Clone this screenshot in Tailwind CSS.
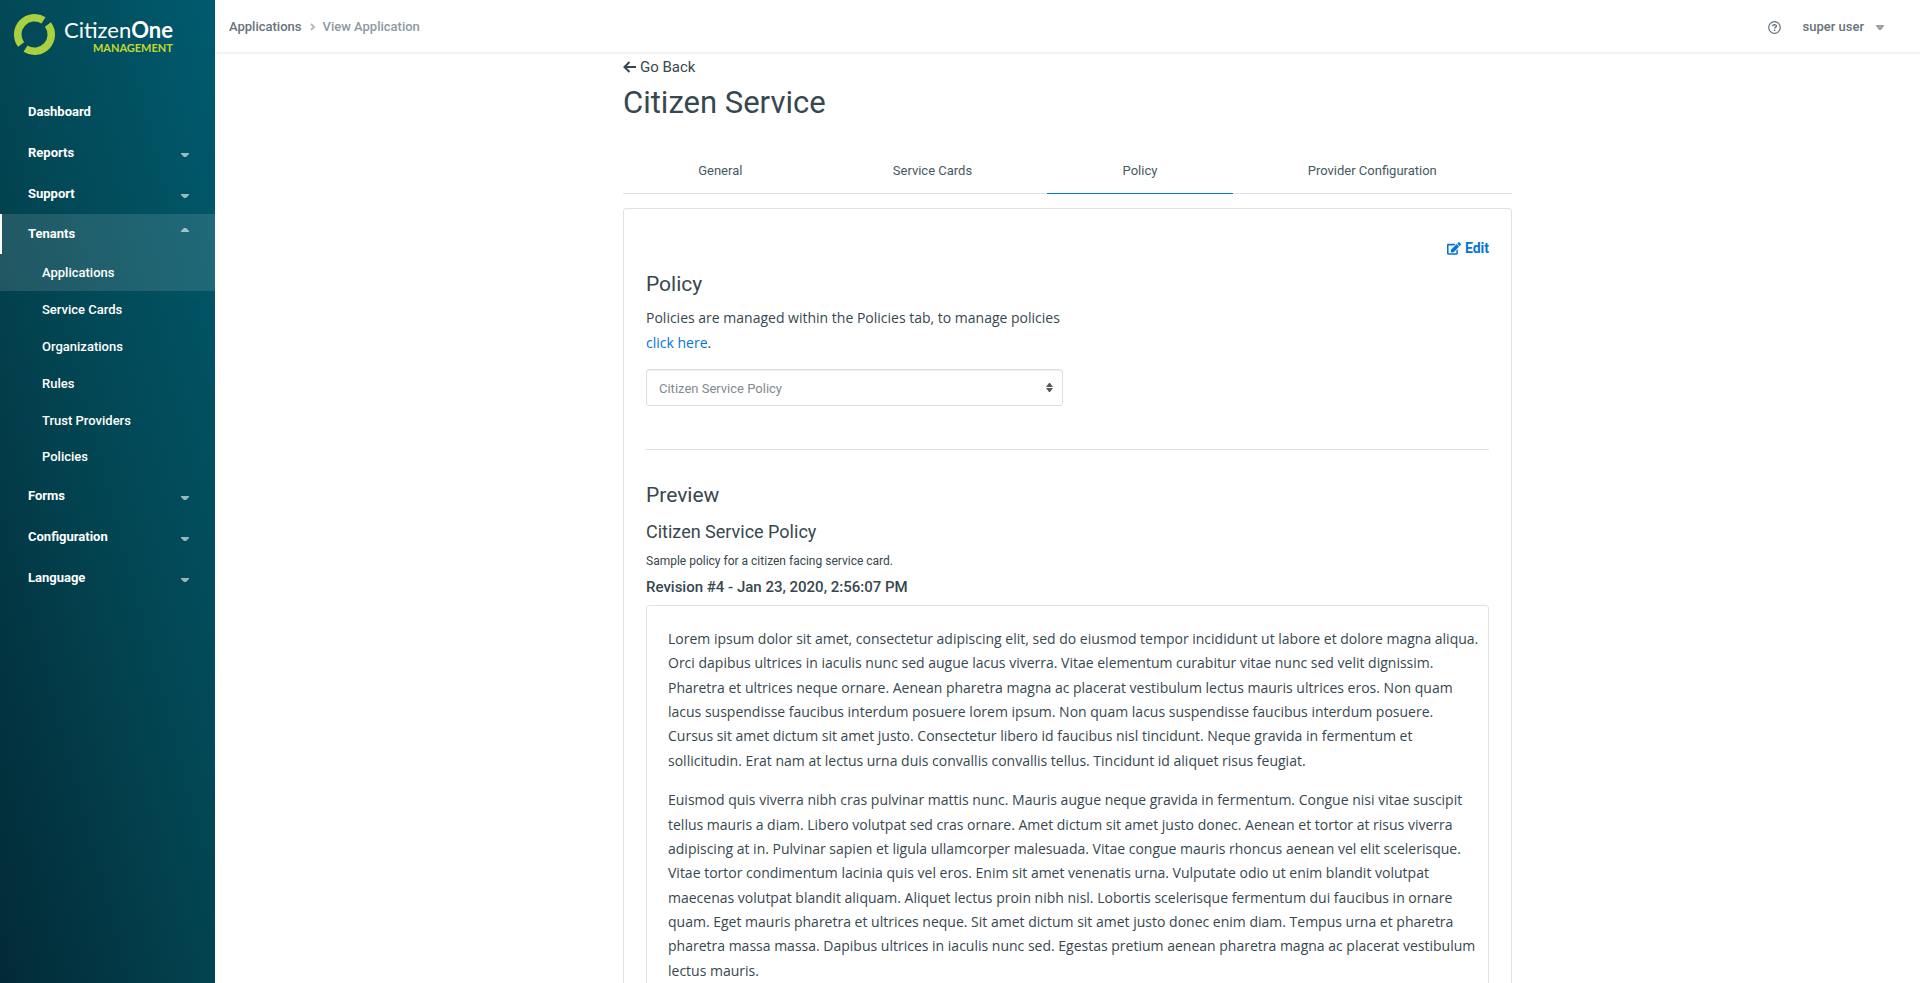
<!DOCTYPE html>
<html lang="en">
<head>
<meta charset="utf-8">
<meta name="viewport" content="width=device-width, initial-scale=1">
<title>CitizenOne Management</title>
<script src="https://cdn.jsdelivr.net/npm/@tailwindcss/browser@4"></script>
</head>
<body class="h-screen overflow-hidden bg-white font-['Roboto','Liberation_Sans',sans-serif] text-[15px] text-[#37474f]">
<div class="flex h-full">

  <aside class="flex w-[215px] shrink-0 flex-col bg-[linear-gradient(75deg,#022a36_0%,#034350_45%,#005b6e_100%)] text-[13px] text-white">
    <a href="#" aria-label="CitizenOne Management" class="flex h-[91px] items-start gap-2 pt-[13px] pl-[13px]">
      <svg class="size-[43px] shrink-0" viewBox="0 0 43 43" fill="none" stroke="#a9d03f" stroke-width="7.5" aria-hidden="true">
        <path d="M30.5 7.4A16.75 16.75 0 0 0 8.1 31.600"/>
        <path d="M34.900 11.4A16.75 16.75 0 0 1 12.5 35.600"/>
      </svg>
      <span class="flex flex-col items-end pt-[5px] font-['Lato',sans-serif]">
        <span class="text-[22px] leading-6">Citizen<b class="font-bold">One</b></span>
        <span class="text-[11px] leading-3 font-bold text-[#c4d92e]">MANAGEMENT</span>
      </span>
    </a>
    <nav class="font-bold">
      <a href="#" class="flex h-[41px] items-center pl-7">Dashboard</a>
      <button type="button" class="flex h-[41px] w-full items-center justify-between pr-[26px] pl-7">Reports
        <svg class="mt-1 h-1 w-2 fill-white/60" viewBox="0 0 8 4"><path d="M0 0h8v1L5 4H3L0 1z"/></svg></button>
      <button type="button" class="flex h-[41px] w-full items-center justify-between pr-[26px] pl-7">Support
        <svg class="mt-1 h-1 w-2 fill-white/60" viewBox="0 0 8 4"><path d="M0 0h8v1L5 4H3L0 1z"/></svg></button>
      <button type="button" class="flex h-10 w-full items-center justify-between border-l-2 border-white bg-white/12 pr-[26px] pl-[26px]">Tenants
        <svg class="mb-2 h-1 w-2 fill-white/60" viewBox="0 0 8 4"><path d="M0 4h8V3L5 0H3L0 3z"/></svg></button>
      <div class="font-medium">
        <a href="#" class="flex h-[37px] items-center bg-white/12 pl-[42px]">Applications</a>
        <a href="#" class="flex h-[37px] items-center pl-[42px]">Service Cards</a>
        <a href="#" class="flex h-[37px] items-center pl-[42px]">Organizations</a>
        <a href="#" class="flex h-[37px] items-center pl-[42px]">Rules</a>
        <a href="#" class="flex h-[37px] items-center pl-[42px]">Trust Providers</a>
        <a href="#" class="flex h-9 items-center pl-[42px]">Policies</a>
      </div>
      <button type="button" class="flex h-[41px] w-full items-center justify-between pr-[26px] pl-7">Forms
        <svg class="mt-1 h-1 w-2 fill-white/60" viewBox="0 0 8 4"><path d="M0 0h8v1L5 4H3L0 1z"/></svg></button>
      <button type="button" class="flex h-[41px] w-full items-center justify-between pr-[26px] pl-7">Configuration
        <svg class="mt-1 h-1 w-2 fill-white/60" viewBox="0 0 8 4"><path d="M0 0h8v1L5 4H3L0 1z"/></svg></button>
      <button type="button" class="flex h-[41px] w-full items-center justify-between pr-[26px] pl-7">Language
        <svg class="mt-1 h-1 w-2 fill-white/60" viewBox="0 0 8 4"><path d="M0 0h8v1L5 4H3L0 1z"/></svg></button>
    </nav>
  </aside>

  <div class="flex min-w-0 flex-1 flex-col">
    <header class="z-10 flex h-[52px] shrink-0 items-center justify-between bg-white pt-[2px] pr-9 pl-[14px] text-[13px] font-medium text-[#66737c] shadow-[0_1px_3px_rgba(0,0,0,0.1)]">
      <nav aria-label="Breadcrumb" class="flex items-center gap-2">
        <a href="#">Applications</a>
        <svg class="h-2 w-[5px]" viewBox="0 0 5 8" fill="none" stroke="#b4bcc2" stroke-width="2"><path d="M1 1l3 3-3 3"/></svg>
        <span class="text-[#8d9aa4]">View Application</span>
      </nav>
      <div class="flex items-center gap-[22px]">
        <button type="button" aria-label="Help">
          <svg class="size-[13px]" viewBox="0 0 13 13" fill="none" stroke="#66737c"><circle cx="6.5" cy="6.5" r="5.8" stroke-width="1.2"/><path d="M4.6 5.2C4.7 3.2 8.4 3.2 8.4 5.1c0 1.3-1.8 1.2-1.8 2.5" stroke-width="1.4"/><path d="M6.6 8.6v1.4" stroke-width="1.5"/></svg>
        </button>
        <button type="button" class="flex items-center gap-3">super user
          <svg class="h-[5px] w-2 fill-[#9aa3a9]" viewBox="0 0 8 5"><path d="M0 0h8v1L5 5H3L0 1z"/></svg></button>
      </div>
    </header>

    <main class="min-h-0 flex-1 overflow-y-auto [scrollbar-width:none]">
      <div class="mx-auto max-w-[889px]">
        <a href="#" class="flex items-center gap-1 pt-1 leading-[22px]">
          <svg class="h-3 w-[13px]" viewBox="0 0 13 12" fill="none" stroke="#37474f" stroke-width="2"><path d="M6.5 1L1.5 6l5 5M1.5 6H13"/></svg>
          Go Back</a>
        <h1 class="pt-[5px] text-[31px] leading-10">Citizen Service</h1>

        <div role="tablist" class="mt-[26px] flex border-b border-[#dee2e6] text-[13px] text-[#455a64]">
          <button type="button" role="tab" class="-mb-px h-[45px] flex-auto border-b border-transparent">General</button>
          <button type="button" role="tab" class="-mb-px h-[45px] flex-auto border-b border-transparent">Service Cards</button>
          <button type="button" role="tab" aria-selected="true" class="-mb-px h-[45px] flex-auto border-b border-[#0275d8]">Policy</button>
          <button type="button" role="tab" class="-mb-px h-[45px] flex-auto border-b border-transparent">Provider Configuration</button>
        </div>

        <section class="mt-[14px] rounded-[3px] border border-[#dee2e6] px-[22px] pt-[29px]">
          <div class="flex justify-end">
            <button type="button" class="flex items-center gap-1 text-sm leading-5 font-bold text-[#0275d8]">
              <svg class="h-[13px] w-[14px]" viewBox="0 0 576 512" fill="currentColor"><path d="M402.600 83.200l90.200 90.200c3.800 3.800 3.800 10 0 13.800L274.400 405.600l-92.800 10.300c-12.400 1.400-22.900-9.100-21.500-21.500l10.300-92.800L388.800 83.200c3.800-3.800 10-3.800 13.800 0zm162-22.900l-48.800-48.800c-15.200-15.200-39.900-15.200-55.200 0l-35.400 35.400c-3.800 3.800-3.800 10 0 13.800l90.200 90.200c3.800 3.800 10 3.800 13.800 0l35.400-35.400c15.200-15.300 15.200-40 0-55.200zM384 346.200V448H64V128h229.800c3.200 0 6.200-1.300 8.500-3.500l40-40c7.600-7.600 2.200-20.500-8.500-20.500H48C21.500 64 0 85.500 0 112v352c0 26.500 21.500 48 48 48h352c26.500 0 48-21.500 48-48V306.200c0-10.700-12.900-16-20.500-8.500l-40 40c-2.200 2.300-3.500 5.300-3.500 8.500z"/></svg>
              Edit</button>
          </div>
          <h2 class="pt-3 text-[21px] leading-7">Policy</h2>
          <p class="mt-[7px] font-['Open_Sans',sans-serif] text-sm leading-[25px]">Policies are managed within the Policies tab, to manage policies<br><a href="#" class="text-[#0275d8]">click here</a>.</p>
          <div class="relative mt-[14px] w-[417px] max-w-full">
            <select aria-label="Policy" class="h-[37px] w-full appearance-none rounded-[3px] border border-[#dce0e4] bg-white px-3 pt-[2px] text-[13px] text-[#818a91] shadow-[inset_0_1px_1px_rgba(0,0,0,0.075)]"><option>Citizen Service Policy</option></select>
            <svg class="pointer-events-none absolute top-[14px] right-[10px] h-[9px] w-[7px] fill-[#55595c]" viewBox="0 0 7 9"><path d="M0 4h7L4 0H3zM0 5h7L4 9H3z"/></svg>
          </div>
          <hr class="mt-[43px] border-[#dee2e6]">
          <h2 class="mt-[31px] text-[21px] leading-7">Preview</h2>
          <h3 class="mt-[11px] text-lg leading-6">Citizen Service Policy</h3>
          <p class="mt-[7px] text-xs leading-5">Sample policy for a citizen facing service card.</p>
          <p class="mt-1 font-medium leading-6">Revision #4 - Jan 23, 2020, 2:56:07 PM</p>
          <div class="mt-[6px] rounded-[3px] border border-[#dee2e6] pt-[21px] pr-2 pl-[21px] font-['Open_Sans',sans-serif] text-sm leading-[1.74]">
            <p class="mb-[15px]">Lorem ipsum dolor sit amet, consectetur adipiscing elit, sed do eiusmod tempor incididunt ut labore et dolore magna aliqua.<br>Orci dapibus ultrices in iaculis nunc sed augue lacus viverra. Vitae elementum curabitur vitae nunc sed velit dignissim.<br>Pharetra et ultrices neque ornare. Aenean pharetra magna ac placerat vestibulum lectus mauris ultrices eros. Non quam<br>lacus suspendisse faucibus interdum posuere lorem ipsum. Non quam lacus suspendisse faucibus interdum posuere.<br>Cursus sit amet dictum sit amet justo. Consectetur libero id faucibus nisl tincidunt. Neque gravida in fermentum et<br>sollicitudin. Erat nam at lectus urna duis convallis convallis tellus. Tincidunt id aliquet risus feugiat.</p>
            <p class="mb-[15px]">Euismod quis viverra nibh cras pulvinar mattis nunc. Mauris augue neque gravida in fermentum. Congue nisi vitae suscipit<br>tellus mauris a diam. Libero volutpat sed cras ornare. Amet dictum sit amet justo donec. Aenean et tortor at risus viverra<br>adipiscing at in. Pulvinar sapien et ligula ullamcorper malesuada. Vitae congue mauris rhoncus aenean vel elit scelerisque.<br>Vitae tortor condimentum lacinia quis vel eros. Enim sit amet venenatis urna. Vulputate odio ut enim blandit volutpat<br>maecenas volutpat blandit aliquam. Aliquet lectus proin nibh nisl. Lobortis scelerisque fermentum dui faucibus in ornare<br>quam. Eget mauris pharetra et ultrices neque. Sit amet dictum sit amet justo donec enim diam. Tempus urna et pharetra<br>pharetra massa massa. Dapibus ultrices in iaculis nunc sed. Egestas pretium aenean pharetra magna ac placerat vestibulum<br>lectus mauris.</p>
          </div>
        </section>
      </div>
    </main>
  </div>
</div>
</body>
</html>
